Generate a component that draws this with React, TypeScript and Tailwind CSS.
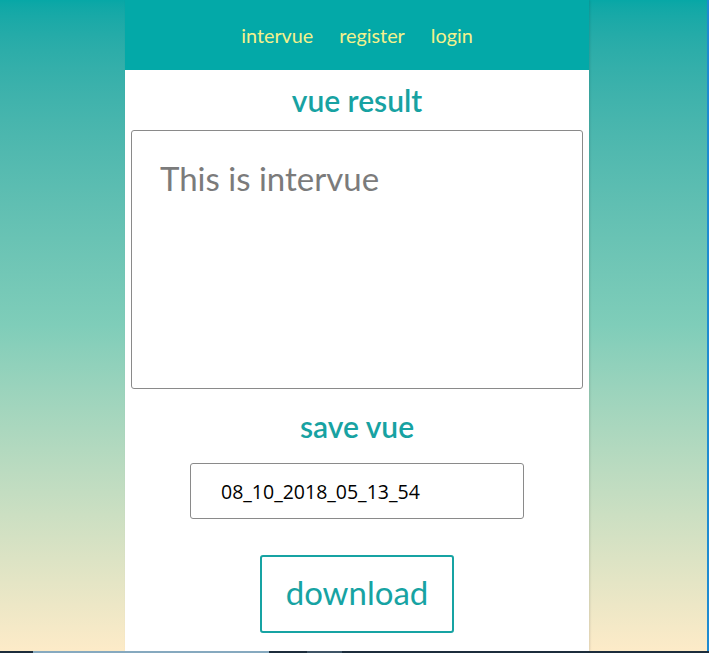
import React, { useState } from 'react';

export default function App() {
  const [result, setResult] = useState('This is intervue');
  const [fileName, setFileName] = useState('08_10_2018_05_13_54');

  return (
    <div className="w-[709px] h-[653px] flex flex-col overflow-hidden" style={{ fontFamily: 'Lato, "Open Sans", sans-serif' }}>
      <div className="flex flex-1 min-h-0">
        <div className="flex-1 bg-linear-to-b from-[#07a7a6] via-[#7fcdb9] to-[#fdebc8] pl-[125px]">
          <div className="w-[464px] h-full bg-white flex flex-col shadow-[1px_0_2px_rgba(0,0,0,0.12)]">
            {/* nav */}
            <nav className="h-[70px] bg-[#03a9a8] flex items-center justify-center gap-[26px] text-[19.8px] text-[#f3f18c] pt-[1px]">
              <a href="#">intervue</a>
              <a href="#">register</a>
              <a href="#">login</a>
            </nav>

            <h2 className="h-[60px] flex items-center justify-center text-[30px] font-semibold text-[#17a2a2]">vue result</h2>
            <div className="px-[6px]">
              <textarea
                value={result}
                onChange={(e) => setResult(e.target.value)}
                className="w-full h-[259px] block resize-none border border-[#8a8a8a] rounded-[3px] pt-[27px] px-[28px] text-[33px] leading-[1.25] text-[#7b7b7b] outline-none"
              />
            </div>

            <h2 className="h-[74px] flex items-center justify-center text-[30px] font-semibold text-[#17a2a2]">save vue</h2>
            <div className="flex justify-center">
              <input
                value={fileName}
                onChange={(e) => setFileName(e.target.value)}
                className="w-[334px] h-[56px] border border-[#8a8a8a] rounded-[3px] px-[30px] text-[19.5px] text-black outline-none"
                style={{ fontFamily: '"Open Sans", sans-serif' }}
              />
            </div>

            <div className="flex justify-center mt-[36px]">
              <button className="w-[194px] h-[78px] border-2 border-[#17a3a3] rounded-[3px] text-[33px] text-[#17a3a3] pb-[2px]">
                download
              </button>
            </div>
          </div>
        </div>
        <div className="w-[2px] bg-[#1f8bd1]" />
      </div>
      {/* taskbar edge */}
      <div className="h-[2px] flex">
        <div className="w-[33px] bg-[#1c2d3c]" />
        <div className="w-[236px] bg-[#86a9bf]" />
        <div className="w-[38px] bg-[#1c2d3c]" />
        <div className="w-[35px] bg-[#3d5466]" />
        <div className="flex-1 bg-[#1c2d3c]" />
      </div>
    </div>
  );
}
